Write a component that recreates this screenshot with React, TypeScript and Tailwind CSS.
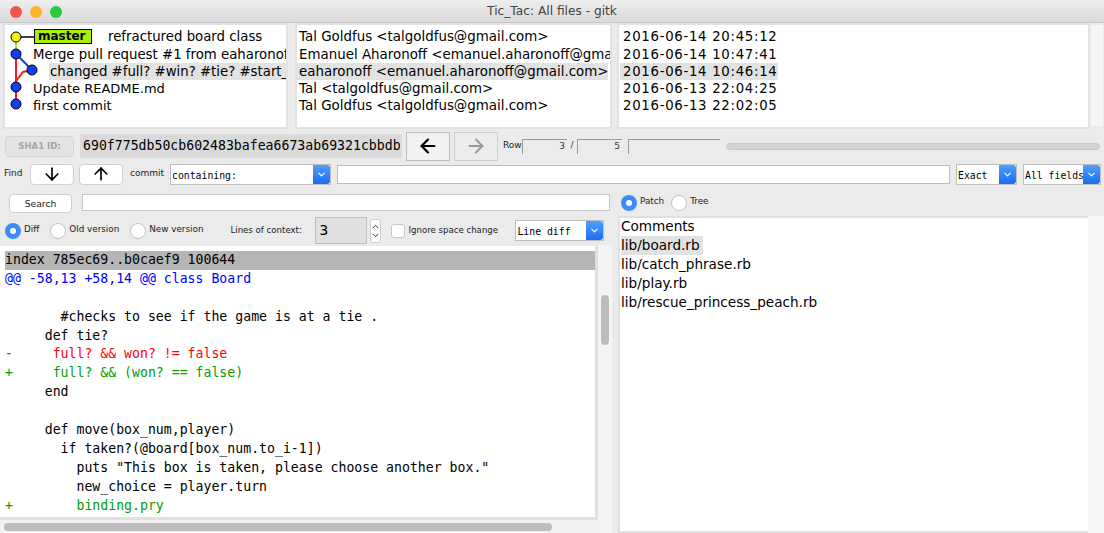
import {ArrowDown, ArrowLeft, ArrowRight, ArrowUp, ChevronDown, ChevronUp} from 'lucide-react';

const ui = "font-['DejaVu_Sans','Open_Sans',sans-serif]";
const mono = "font-['DejaVu_Sans_Mono','Liberation_Mono',monospace]";

const authors = [
  'Tal Goldfus <talgoldfus@gmail.com>',
  'Emanuel Aharonoff <emanuel.aharonoff@gmail.com>',
  'eaharonoff <emanuel.aharonoff@gmail.com>',
  'Tal <talgoldfus@gmail.com>',
  'Tal Goldfus <talgoldfus@gmail.com>',
];

const dates = [
  '2016-06-14 20:45:12',
  '2016-06-14 10:47:41',
  '2016-06-14 10:46:14',
  '2016-06-13 22:04:25',
  '2016-06-13 22:02:05',
];

const diff = [
  {text: 'index 785ec69..b0caef9 100644', color: 'text-black bg-[#b5b5b5]'},
  {text: '@@ -58,13 +58,14 @@ class Board', color: 'text-[#0000ff]'},
  {text: ' ', color: ''},
  {text: '       #checks to see if the game is at a tie .', color: 'text-black'},
  {text: '     def tie?', color: 'text-black'},
  {text: '-     full? && won? != false', color: 'text-[#ff0000]'},
  {text: '+     full? && (won? == false)', color: 'text-[#00a000]'},
  {text: '     end', color: 'text-black'},
  {text: ' ', color: ''},
  {text: '     def move(box_num,player)', color: 'text-black'},
  {text: '       if taken?(@board[box_num.to_i-1])', color: 'text-black'},
  {text: '         puts "This box is taken, please choose another box."', color: 'text-black'},
  {text: '         new_choice = player.turn', color: 'text-black'},
  {text: '+        binding.pry', color: 'text-[#00a000]'},
];

function Select({label, className}: {label: string; className: string}) {
  return (
    <div className={`flex h-[21px] items-stretch border border-[#bdbdbd] bg-white ${className}`}>
      <span className={`min-w-0 flex-1 overflow-hidden pl-[1px] text-[9.8px] leading-[21px] whitespace-nowrap text-black ${mono}`}>
        {label}
      </span>
      <span className="flex w-[17px] shrink-0 items-center justify-center rounded-r-[3px] bg-gradient-to-b from-[#4f9dfb] to-[#1a6cf0]">
        <ChevronDown size={11} strokeWidth={2.5} color="white" />
      </span>
    </div>
  );
}

function Radio({label, on}: {label: string; on?: boolean}) {
  return (
    <div className="flex items-center gap-[3px]">
      {on ? (
        <span className="flex size-[16px] items-center justify-center rounded-full bg-[#3b8cf6]">
          <span className="size-[6px] rounded-full bg-white" />
        </span>
      ) : (
        <span className="size-[16px] rounded-full border border-[#c4c4c4] bg-white" />
      )}
      <span className="-mt-[2px] text-[8.8px] text-[#222]">{label}</span>
    </div>
  );
}

function ArrowButton({children}: {children: React.ReactNode}) {
  return (
    <div className="flex h-[21px] w-[44px] items-center justify-center rounded-[4px] border border-[#cfcfcf] bg-white">
      {children}
    </div>
  );
}

export default function App() {
  return (
    <div className={`flex h-[533px] w-[1104px] flex-col overflow-hidden bg-[#ebebeb] ${ui}`}>
      <header className="relative flex h-[23px] shrink-0 items-center justify-center border-b border-[#c8c8c8] bg-gradient-to-b from-[#eeeeee] to-[#d9d9d9] pt-[1px]">
        <div className="absolute top-[6px] left-[10px] flex gap-[8px]">
          <span className="size-[12px] rounded-full bg-[#f5554f]" />
          <span className="size-[12px] rounded-full bg-[#fbb32e]" />
          <span className="size-[12px] rounded-full bg-[#28c840]" />
        </div>
        <span className="text-[12.2px] text-[#444]">Tic_Tac: All files - gitk</span>
      </header>

      <section className="mt-[2px] flex h-[102px] shrink-0 pr-[1px] pl-[5px] text-[13.3px] leading-[17px] text-black">
        <div className="flex w-[281px] shrink-0 overflow-hidden bg-white pt-[4px] ring-2 ring-[#e2e2e2]">
          <svg width="28" height="85" viewBox="0 0 28 85" className="-mt-[1px] shrink-0 overflow-visible">
            <path d="M11 9V26" stroke="#a3e01c" strokeWidth="2" fill="none" />
            <path d="M11 26V76" stroke="#f01c1c" strokeWidth="2" fill="none" />
            <path d="M11 26L27 42" stroke="#0f3fe0" strokeWidth="2" fill="none" />
            <path d="M27 42L18 44L11 53" stroke="#f01c1c" strokeWidth="2" fill="none" />
            <path d="M15 9H29" stroke="black" strokeWidth="1.5" fill="none" />
            <circle cx="11" cy="9" r="5" fill="#f5f10f" stroke="black" />
            <circle cx="11" cy="26" r="5" fill="#0f3ff5" stroke="black" />
            <circle cx="27" cy="42" r="5" fill="#0f3ff5" stroke="black" />
            <circle cx="11" cy="59" r="5" fill="#0f3ff5" stroke="black" />
            <circle cx="11" cy="76" r="5" fill="#0f3ff5" stroke="black" />
          </svg>
          <div className="min-w-0 flex-1 whitespace-nowrap">
            <div className="-mt-[1px] flex h-[18px] items-start">
              <span className="mt-[1px] ml-[1px] h-[15px] w-[58px] border border-black bg-[#a8f000] pl-[3px] text-[12px] leading-[13px] font-bold">master</span>
              <span className="ml-[16px]">refractured board class</span>
            </div>
            <div className="h-[17px] overflow-hidden">Merge pull request #1 from eaharonoff</div>
            <div className="ml-[16px] h-[17px] overflow-hidden bg-[#e2e2e2] pl-[1px]">changed #full? #win? #tie? #start_round</div>
            <div className="h-[17px] text-[13px]">Update README.md</div>
            <div className="h-[17px] text-[13px]">first commit</div>
          </div>
        </div>
        <div className="ml-[11px] w-[313px] shrink-0 overflow-hidden bg-white pt-[4px] text-[13.4px] whitespace-nowrap ring-2 ring-[#e2e2e2]">
          {authors.map((a, i) => (
            <div key={i} className={`pl-[2px] ${i === 0 ? '-mt-[1px] h-[18px]' : 'h-[17px]'} ${i === 2 ? 'w-[311px] overflow-hidden bg-[#e2e2e2]' : ''}`}>{a}</div>
          ))}
        </div>
        <div className="ml-[9px] w-[469px] shrink-0 bg-white pt-[4px] pl-[4px] tracking-[0.7px] whitespace-nowrap ring-2 ring-[#e2e2e2]">
          {dates.map((d, i) => (
            <div key={d} className={`${i === 0 ? '-mt-[1px] h-[18px]' : 'h-[17px]'} ${i === 2 ? '-ml-[3px] w-[158px] bg-[#e2e2e2] pl-[3px]' : ''}`}>{d}</div>
          ))}
        </div>
        <div className="ml-[3px] min-w-0 flex-1 border-b border-[#e6e6e6] bg-[#f6f6f6]" />
      </section>

      <section className="mt-[6px] flex h-[26px] shrink-0 items-center pl-[5px]">
        <div className="flex h-[21px] w-[69px] items-center justify-center rounded-[4px] border border-[#d4d4d4] bg-[#e4e4e4] text-[8.5px] font-semibold text-[#a5a5a5]">SHA1 ID:</div>
        <div className={`ml-[6px] flex h-[24px] w-[322px] items-center overflow-hidden border-2 border-[#dcdcdc] bg-[#d9d9d9] pl-[1px] text-[13.2px] whitespace-nowrap text-black ${mono}`}>
          690f775db50cb602483bafea6673ab69321cbbdb
        </div>
        <div className="ml-[4px] flex h-[29px] w-[44px] items-center justify-center border border-[#bdbdbd] bg-[#f2f2f2]">
          <ArrowLeft size={22} strokeWidth={2.4} color="black" />
        </div>
        <div className="ml-[4px] flex h-[29px] w-[44px] items-center justify-center border border-[#cfcfcf] bg-[#ececec]">
          <ArrowRight size={22} strokeWidth={2.2} color="#9a9a9a" />
        </div>
        <span className="ml-[5px] w-[19px] text-[9px] text-[#222]">Row</span>
        <div className="flex h-[15px] w-[45px] items-center justify-end border-t border-l border-[#9a9a9a] pr-[2px] text-[9px] text-[#333]">3</div>
        <span className="w-[10px] text-center text-[9px] text-[#333]">/</span>
        <div className="flex h-[15px] w-[45px] items-center justify-end border-t border-l border-[#9a9a9a] pr-[2px] text-[9px] text-[#333]">5</div>
        <div className="ml-[6px] h-[15px] w-[92px] border-t border-l border-[#9a9a9a]" />
        <div className="mr-[4px] ml-[6px] h-[7px] flex-1 rounded-full border border-[#c9c9c9] bg-[#d3d3d3]" />
      </section>

      <section className="mt-[4px] flex h-[22px] shrink-0 items-center pl-[4px]">
        <span className="w-[26px] text-[9px] text-[#222]">Find</span>
        <ArrowButton><ArrowDown size={20} strokeWidth={2} color="black" /></ArrowButton>
        <div className="ml-[5px]"><ArrowButton><ArrowUp size={20} strokeWidth={2} color="black" /></ArrowButton></div>
        <span className="ml-[7px] w-[40px] text-[9px] text-[#222]">commit</span>
        <Select label="containing:" className="w-[161px]" />
        <div className="ml-[6px] h-[19px] w-[613px] border border-[#bdbdbd] bg-white" />
        <Select label="Exact" className="ml-[6px] w-[61px]" />
        <Select label="All fields" className="ml-[6px] w-[78px]" />
      </section>

      <section className="mt-[8px] flex h-[19px] shrink-0 items-center pl-[9px]">
        <div className="mt-[2px] flex h-[19px] w-[63px] items-center justify-center rounded-[4px] border border-[#cfcfcf] bg-white text-[9.2px] font-medium text-[#222]">Search</div>
        <div className="ml-[10px] h-[17px] w-[528px] border border-[#c6c6c6] bg-white" />
        <div className="ml-[11px] flex gap-[7px]">
          <Radio label="Patch" on />
          <Radio label="Tree" />
        </div>
      </section>

      <div className="mt-[4px] flex min-h-0 flex-1">
        <div className="flex w-[612px] shrink-0 flex-col">
          <section className="flex h-[29px] shrink-0 items-center pl-[5px]">
            <div className="flex gap-[11px]">
              <Radio label="Diff" on />
              <Radio label="Old version" />
              <Radio label="New version" />
            </div>
            <span className="ml-[27px] w-[85px] text-[8.6px] text-[#222]">Lines of context:</span>
            <div className={`flex h-[27px] w-[52px] items-center border border-[#bdbdbd] bg-[#e0e0e0] pl-[3px] text-[14.5px] text-black ${mono}`}>3</div>
            <div className="ml-[3px] flex h-[24px] w-[11px] flex-col items-center justify-center rounded-[3px] border border-[#cfcfcf] bg-white">
              <ChevronUp size={9} strokeWidth={2.5} color="#222" />
              <ChevronDown size={9} strokeWidth={2.5} color="#222" />
            </div>
            <div className="ml-[10px] size-[14px] rounded-[3px] border border-[#c4c4c4] bg-white" />
            <span className="ml-[3px] w-[107px] text-[8.6px] text-[#222]">Ignore space change</span>
            <Select label="Line diff" className="w-[89px]" />
          </section>
          <div className="flex min-h-0 flex-1">
            <div className="flex min-w-0 flex-1 flex-col">
              <div className={`mt-[1px] min-h-0 flex-1 overflow-hidden border-r-[3px] border-b-[3px] border-[#e0e0e0] bg-white pt-[5px] pl-[5px] text-[13.2px] leading-[18.9px] whitespace-pre ${mono}`}>
                {diff.map((line, i) => (
                  <div key={i} className={`h-[18.9px] ${line.color}`}>{line.text}</div>
                ))}
              </div>
              <div className="flex h-[13px] shrink-0 items-center bg-[#f2f2f2] pl-[4px]">
                <div className="h-[8px] w-[548px] rounded-full bg-[#bdbdbd]" />
              </div>
            </div>
            <div className="flex w-[14px] shrink-0 flex-col bg-[#f4f4f4] pt-[50px]">
              <div className="mx-[3px] h-[50px] rounded-full bg-[#bdbdbd]" />
            </div>
          </div>
        </div>
        <div className="-mt-[1px] ml-[6px] flex min-w-0 flex-1 pt-[1px]">
          <div className="w-[470px] shrink-0 border-t-2 border-b-[2px] border-l-[2px] border-[#e0e0e0] bg-white pl-[1px] text-[13.6px] leading-[18.8px] text-black">
            <div className="-mt-[1px] h-[19px]">Comments</div>
            <div className="h-[19px] w-[82px] bg-[#e2e2e2]">lib/board.rb</div>
            <div className="h-[19px]">lib/catch_phrase.rb</div>
            <div className="h-[19px]">lib/play.rb</div>
            <div className="h-[19px]">lib/rescue_princess_peach.rb</div>
          </div>
          <div className="flex-1 bg-[#f5f5f5]" />
        </div>
      </div>
    </div>
  );
}
